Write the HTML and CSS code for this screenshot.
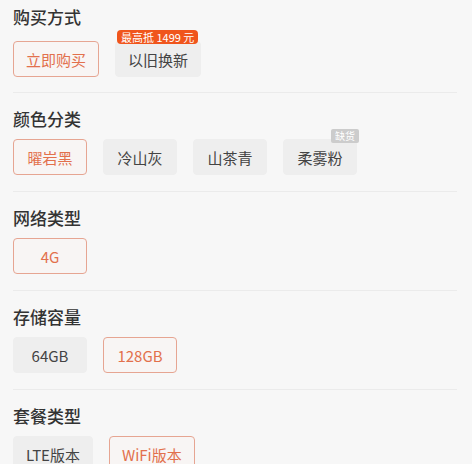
FILE: index.html
```html
<!DOCTYPE html>
<html lang="zh-CN">
<head>
<meta charset="utf-8">
<link rel="stylesheet" href="styles.css">
</head>
<body>
<div class="panel">
  <section class="group group-first">
    <h3 class="group-title">购买方式</h3>
    <div class="options">
      <div class="opt opt-on">立即购买</div>
      <div class="opt opt-badged">以旧换新<span class="badge badge-hot">最高抵 1499 元</span></div>
    </div>
  </section>
  <section class="group">
    <h3 class="group-title">颜色分类</h3>
    <div class="options">
      <div class="opt opt-on">曜岩黑</div>
      <div class="opt">冷山灰</div>
      <div class="opt">山茶青</div>
      <div class="opt opt-badged">柔雾粉<span class="badge badge-out">缺货</span></div>
    </div>
  </section>
  <section class="group">
    <h3 class="group-title">网络类型</h3>
    <div class="options">
      <div class="opt opt-on">4G</div>
    </div>
  </section>
  <section class="group">
    <h3 class="group-title">存储容量</h3>
    <div class="options">
      <div class="opt">64GB</div>
      <div class="opt opt-on">128GB</div>
    </div>
  </section>
  <section class="group">
    <h3 class="group-title">套餐类型</h3>
    <div class="options">
      <div class="opt">LTE版本</div>
      <div class="opt opt-on">WiFi版本</div>
    </div>
  </section>
</div>
</body>
</html>
```
FILE: styles.css
```css
html, body {
  margin: 0;
  padding: 0;
  background: #f7f7f7;
  font-family: "Noto Sans CJK SC", "Noto Sans", sans-serif;
  overflow: hidden;
}
.panel {
  padding: 0 15px 0 13px;
}
.group {
  padding: 15px 0 16px;
  border-bottom: 1px solid #ebebeb;
}
.group-first {
  padding-top: 6px;
  padding-bottom: 15px;
}
.group-title {
  margin: 0 0 9px;
  font-size: 17px;
  line-height: 22px;
  font-weight: 500;
  color: #333;
}
.group-first .group-title {
  margin-bottom: 13px;
}
.options {
  display: flex;
  gap: 16px;
}
.opt {
  position: relative;
  box-sizing: border-box;
  min-width: 74px;
  height: 36px;
  padding: 0 12px;
  display: flex;
  align-items: center;
  justify-content: center;
  background: #eeeeee;
  border: 1px solid #eeeeee;
  border-radius: 4px;
  font-size: 15px;
  color: #444;
}
.opt-on {
  background: #f8f5f4;
  border-color: #e6a592;
  color: #e2704c;
}
.badge {
  position: absolute;
  top: -12px;
  right: -10px;
  height: 14px;
  padding: 0 4px;
  border-radius: 4px;
  font-size: 11px;
  line-height: 14px;
  color: #fff;
  white-space: nowrap;
}
.badge-hot {
  background: #f0551c;
  right: auto;
  left: 1px;
}
.badge-out {
  background: #cccccc;
  font-size: 10px;
  right: -3px;
  top: -11px;
  border-radius: 2px;
}
```
